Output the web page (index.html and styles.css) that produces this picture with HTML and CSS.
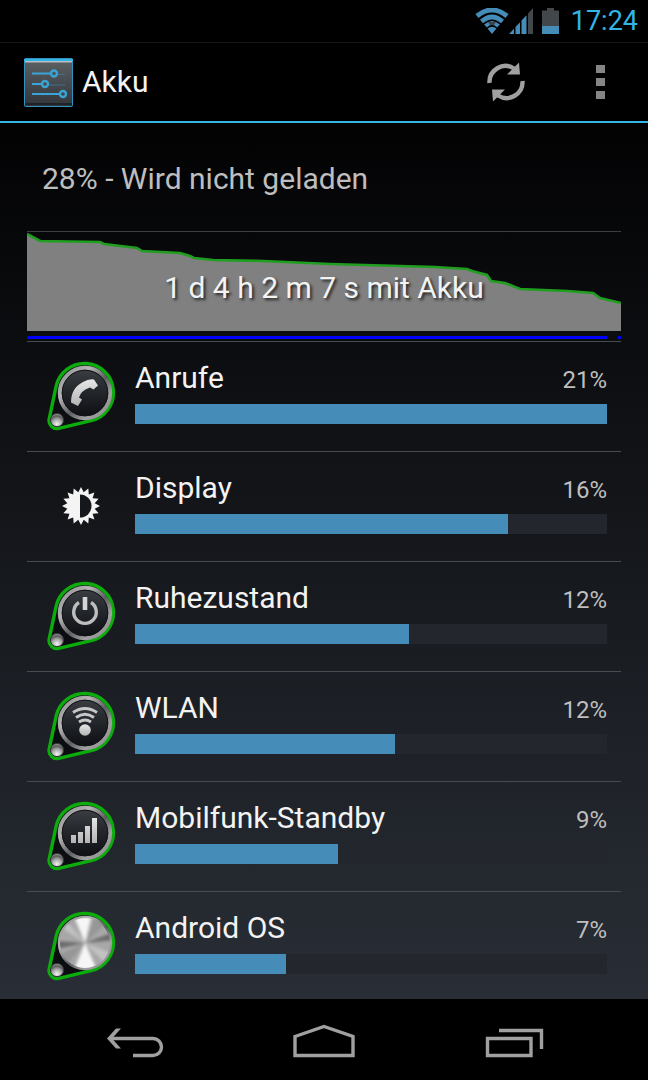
FILE: index.html
```
<!DOCTYPE html>
<html lang="de">
<head>
    <meta charset="UTF-8">
    <meta name="viewport" content="width=device-width, initial-scale=1.0">
    <title>Akku</title>
    <link rel="stylesheet" href="styles.css">
</head>
<body>
    <!-- Gemeinsame Teile der Symbole -->
    <svg class="defs" aria-hidden="true">
        <defs>
            <linearGradient id="ring" x1="0" y1="0" x2="1" y2="1">
                <stop offset="0" stop-color="#8c8c8c"/>
                <stop offset="0.3" stop-color="#b4b4b4"/>
                <stop offset="0.55" stop-color="#5c5e60"/>
                <stop offset="0.75" stop-color="#a0a0a0"/>
                <stop offset="1" stop-color="#8a8a8a"/>
            </linearGradient>
            <linearGradient id="face" x1="0" y1="0" x2="0" y2="1">
                <stop offset="0" stop-color="#3c3f43"/>
                <stop offset="0.45" stop-color="#24272c"/>
                <stop offset="1" stop-color="#0c0e12"/>
            </linearGradient>
            <linearGradient id="glyph" x1="0" y1="0" x2="0" y2="1">
                <stop offset="0" stop-color="#e6e6e6"/>
                <stop offset="1" stop-color="#b4b4b4"/>
            </linearGradient>
            <radialGradient id="bead" cx="0.5" cy="0.8" r="0.8">
                <stop offset="0" stop-color="#f4f4f4"/>
                <stop offset="0.45" stop-color="#a8a8a8"/>
                <stop offset="0.75" stop-color="#5a5a5a"/>
                <stop offset="1" stop-color="#a0a0a0"/>
            </radialGradient>
            <linearGradient id="panel" x1="0" y1="0" x2="0" y2="1">
                <stop offset="0" stop-color="#5c6164"/>
                <stop offset="1" stop-color="#32363b"/>
            </linearGradient>
            <clipPath id="disc"><circle cx="39" cy="33" r="25"/></clipPath>
            <filter id="soft"><feGaussianBlur stdDeviation="1.6"/></filter>
        </defs>
        <symbol id="knob" viewBox="0 0 70 72">
            <path d="M10.1 26.4A29 29 0 1 1 45.1 60.7L12.8 68.3A8 8 0 0 1 3.2 58.8Z" fill="#0b0d10" stroke="#0cac0c" stroke-width="3.4"/>
            <circle cx="39" cy="33" r="25.2" fill="url(#face)" stroke="url(#ring)" stroke-width="4"/>
            <circle cx="39" cy="33" r="22.8" fill="none" stroke="#111316" stroke-width="1"/>
            <circle cx="11" cy="60" r="6.6" fill="url(#bead)" stroke="#34373a" stroke-width="1"/>
        </symbol>
    </svg>

    <div class="statusbar">
        <svg class="status-icon wifi" viewBox="0 0 34 26">
            <g fill="none" stroke="#468cb8">
                <path d="M2 8Q17-4 32 8" stroke-width="5"/>
                <path d="M6.500 13.500Q17 4.500 27.500 13.500" stroke-width="4.600"/>
                <path d="M10.500 18Q17 12 23.500 18" stroke-width="4"/>
            </g>
            <path d="M13 14h8l-2 3h-4z" fill="#39434b"/>
            <path d="M12.500 20.500Q17 17 21.500 20.500L17 26Z" fill="#468cb8"/>
        </svg>
        <svg class="status-icon signal" viewBox="0 0 24 26">
            <path d="M0 26L5 20.700V26ZM6.500 26V19L11 14.200V26ZM12.500 26V12.500L17.500 7.200V26Z" fill="#468cb8"/>
            <path d="M19 26V5.600L24 0V26Z" fill="#41474b"/>
        </svg>
        <svg class="status-icon battery" viewBox="0 0 17 26">
            <path d="M0 2.500H5V0H12V2.500H17V19H0Z" fill="#41474b"/>
            <path d="M0 18H17V26H0Z" fill="#468cb8"/>
        </svg>
        <span class="clock">17:24</span>
    </div>

    <header class="actionbar">
        <svg class="app-icon" viewBox="0 0 49 49">
            <rect x="0.500" y="0.500" width="48" height="48" rx="1" fill="url(#panel)" stroke="#3292c2"/>
            <path d="M0 1h49v2H0z" fill="#33b5e5"/>
            <path d="M1 3h47v1.500H1z" fill="#b4bec4"/>
            <path d="M1 46h47" stroke="#1d2327" stroke-width="2"/>
            <g fill="none" stroke="#3ba4d6" stroke-width="2">
                <path d="M8 15.500H27M8 26H18M8 36H36"/>
                <path d="M33 16.500H41M24 27H41" stroke="#40718a" stroke-width="1"/>
                <circle cx="30" cy="15.500" r="3" stroke-width="2.400"/>
                <circle cx="21" cy="26" r="3" stroke-width="2.400"/>
                <circle cx="39" cy="36" r="3" stroke-width="2.400"/>
            </g>
        </svg>
        <h1 class="title">Akku</h1>
        <button class="action" aria-label="Aktualisieren">
            <svg class="refresh" viewBox="0 0 38 40">
                <g fill="none" stroke="#a0a0a0" stroke-width="4.400">
                    <path d="M2.500 21A16 16 0 0 1 27 6.500"/>
                    <path d="M35.500 19A16 16 0 0 1 11 33.500"/>
                </g>
                <path d="M32 0.500L33 12.500H20ZM6 39.500L5 27.500H18Z" fill="#a0a0a0"/>
            </svg>
        </button>
        <button class="action" aria-label="Menü">
            <svg class="overflow" viewBox="0 0 9 34">
                <path d="M0 0h9v8H0zM0 13h9v8H0zM0 26h9v8H0z" fill="#858585"/>
            </svg>
        </button>
    </header>

    <main class="content">
        <p class="summary">28% - Wird nicht geladen</p>

        <section class="history">
            <svg class="chart" viewBox="0 0 594 109" preserveAspectRatio="none">
                <path d="M0 2L13 9L73 10L77 12L110 16L115 19L153 21L163 24L167 26L186 28L236 29L303 32L408 35L440 37L445 39L460 43L464 49L478 51L493 57L540 59L566 61L573 66L594 71V99H0Z" fill="#808080"/>
                <path d="M0 2L13 9L73 10L77 12L110 16L115 19L153 21L163 24L167 26L186 28L236 29L303 32L408 35L440 37L445 39L460 43L464 49L478 51L493 57L540 59L566 61L573 66L594 71" fill="none" stroke="#1f9e1f" stroke-width="2.600"/>
                <path d="M0 104H580V107H0ZM591 104H594V107H591Z" fill="#0000ff"/>
            </svg>
            <span class="duration">1 d 4 h 2 m 7 s mit Akku</span>
        </section>

        <ul class="usage">
            <li>
                <a class="item" href="#">
                    <svg class="icon" viewBox="0 0 70 72">
                        <use href="#knob"/>
                        <path d="M25 42.500Q25 28 37 22Q43 18.500 48 19.500L52 25.500L47.500 29.500L44 27.500Q35 30.500 33 37.500L36 39.500L32 46Z" fill="url(#glyph)"/>
                    </svg>
                    <div class="info">
                        <div class="label"><span class="name">Anrufe</span><span class="percent">21%</span></div>
                        <div class="bar"><div class="fill" style="width: 100%"></div></div>
                    </div>
                </a>
            </li>
            <li>
                <a class="item" href="#">
                    <svg class="icon" viewBox="0 0 70 72">
                        <g transform="translate(35 36)">
                            <path d="M19 0L13.700 2.700L17.600 7.300L11.600 7.800L13.400 13.400L7.800 11.600L7.300 17.600L2.700 13.700L0 19L-2.700 13.700L-7.300 17.600L-7.800 11.600L-13.400 13.400L-11.600 7.800L-17.600 7.300L-13.700 2.700L-19 0L-13.700-2.700L-17.600-7.300L-11.600-7.800L-13.400-13.400L-7.800-11.600L-7.300-17.600L-2.700-13.700L0-19L2.700-13.700L7.300-17.600L7.800-11.600L13.400-13.400L11.600-7.800L17.600-7.300L13.700-2.700Z" fill="#f4f4f4"/>
                            <path d="M-1-11.500A11.500 11.500 0 0 1-1 11.500Z" fill="#14171b"/>
                        </g>
                    </svg>
                    <div class="info">
                        <div class="label"><span class="name">Display</span><span class="percent">16%</span></div>
                        <div class="bar"><div class="fill" style="width: 79%"></div></div>
                    </div>
                </a>
            </li>
            <li>
                <a class="item" href="#">
                    <svg class="icon" viewBox="0 0 70 72">
                        <use href="#knob"/>
                        <path d="M33 22.500A11.300 11.300 0 1 0 45 22.500" fill="none" stroke="#bebebe" stroke-width="3.400"/>
                        <path d="M36.700 17h4.600v13h-4.600z" fill="#d4d4d4"/>
                    </svg>
                    <div class="info">
                        <div class="label"><span class="name">Ruhezustand</span><span class="percent">12%</span></div>
                        <div class="bar"><div class="fill" style="width: 58%"></div></div>
                    </div>
                </a>
            </li>
            <li>
                <a class="item" href="#">
                    <svg class="icon" viewBox="0 0 70 72">
                        <use href="#knob"/>
                        <g fill="none" stroke="#c8c8c8" stroke-width="2.800">
                            <path d="M27 22.500Q39 14.500 51 22.500"/>
                            <path d="M30 27.500Q39 21 48 27.500"/>
                            <path d="M33 32Q39 28 45 32"/>
                        </g>
                        <circle cx="39" cy="40" r="5.800" fill="url(#glyph)"/>
                    </svg>
                    <div class="info">
                        <div class="label"><span class="name">WLAN</span><span class="percent">12%</span></div>
                        <div class="bar"><div class="fill" style="width: 55%"></div></div>
                    </div>
                </a>
            </li>
            <li>
                <a class="item" href="#">
                    <svg class="icon" viewBox="0 0 70 72">
                        <use href="#knob"/>
                        <path d="M25 35h5v8h-5zM32 32h5v11h-5zM39 26h5v17h-5zM46 18h5v25h-5z" fill="url(#glyph)"/>
                    </svg>
                    <div class="info">
                        <div class="label"><span class="name">Mobilfunk-Standby</span><span class="percent">9%</span></div>
                        <div class="bar"><div class="fill" style="width: 43%"></div></div>
                    </div>
                </a>
            </li>
            <li>
                <a class="item" href="#">
                    <svg class="icon" viewBox="0 0 70 72">
                        <use href="#knob"/>
                        <g clip-path="url(#disc)">
                            <circle cx="39" cy="33" r="25" fill="#a8a8a8"/>
                            <g filter="url(#soft)">
                                <path d="M39 33L27 4H46ZM39 33L27 62H52Z" fill="#f6f6f6"/>
                                <path d="M39 33L10 31V39ZM39 33L68 22V30Z" fill="#6c6c6c"/>
                                <path d="M39 33L50 4L62 12ZM39 33L10 46L20 56Z" fill="#969696"/>
                                <path d="M39 33L10 14L18 8ZM39 33L68 44L60 54Z" fill="#c2c2c2"/>
                            </g>
                        </g>
                    </svg>
                    <div class="info">
                        <div class="label"><span class="name">Android OS</span><span class="percent">7%</span></div>
                        <div class="bar"><div class="fill" style="width: 32%"></div></div>
                    </div>
                </a>
            </li>
        </ul>
    </main>

    <nav class="navbar">
        <button class="nav-button" aria-label="Zurück">
            <svg viewBox="0 0 62 36">
                <path d="M7 16.500H50A8.500 8.500 0 0 1 50 33.500H30" fill="none" stroke="#a0a0a0" stroke-width="3.400"/>
                <path d="M4 16.500L13 6.500H18L9 16.500L18 26.500H13Z" fill="#a0a0a0"/>
            </svg>
        </button>
        <button class="nav-button" aria-label="Startseite">
            <svg viewBox="0 0 62 36">
                <path d="M2 14.500L31 4.500L60 14.500V33.500H2Z" fill="none" stroke="#a0a0a0" stroke-width="3.400"/>
            </svg>
        </button>
        <button class="nav-button" aria-label="Letzte Apps">
            <svg viewBox="0 0 62 36">
                <path d="M4.500 16.500H48V33.500H4.500ZM16 8.500H58.500V27" fill="none" stroke="#a0a0a0" stroke-width="3.400"/>
            </svg>
        </button>
    </nav>
</body>
</html>
```
FILE: styles.css
```
* {
    box-sizing: border-box;
}
body {
    font-family: Roboto, Arial, sans-serif;
    display: flex;
    flex-direction: column;
    height: 100vh;
    margin: 0;
    background: #000000;
    color: #f3f3f3;
}
button {
    padding: 0;
    border: none;
    background: none;
    cursor: pointer;
}
svg {
    display: block;
    flex: none;
}
.defs {
    position: absolute;
    width: 0;
    height: 0;
}
.statusbar {
    display: flex;
    justify-content: flex-end;
    align-items: center;
    height: 43px;
    padding-right: 10px;
    border-bottom: 1px solid #141414;
}
.status-icon {
    height: 26px;
}
.wifi {
    width: 34px;
}
.signal {
    width: 24px;
}
.battery {
    width: 17px;
    margin: 0 12px 0 9px;
}
.clock {
    font-size: 27px;
    line-height: 42px;
    color: #33b5e5;
}
.actionbar {
    display: flex;
    align-items: center;
    height: 80px;
    padding-left: 24px;
    border-bottom: 2px solid #33b5e5;
}
.app-icon {
    width: 49px;
    height: 49px;
}
.title {
    flex: 1;
    margin: 0 0 0 9px;
    font-size: 30px;
    font-weight: normal;
    line-height: 40px;
}
.action {
    display: flex;
    justify-content: center;
    align-items: center;
    width: 95px;
    height: 78px;
}
.refresh {
    width: 38px;
    height: 40px;
}
.overflow {
    width: 9px;
    height: 34px;
}
.content {
    flex: 1;
    min-height: 0;
    overflow-y: auto;
    scrollbar-width: none;
    background: linear-gradient(#020203, #292e36);
}
.summary {
    margin: 0;
    padding: 36px 42px 32px;
    font-size: 30px;
    line-height: 40px;
    color: #bebebe;
}
.history {
    position: relative;
    margin: 0 27px;
    border-top: 1px solid #3c3f41;
}
.chart {
    width: 100%;
    height: 109px;
}
.duration {
    position: absolute;
    top: 36px;
    left: 0;
    width: 100%;
    font-size: 30px;
    line-height: 40px;
    text-align: center;
    text-shadow: 2px 2px 3px #222222;
}
.usage {
    margin: 0 27px;
    padding: 0;
    list-style: none;
}
.item {
    display: flex;
    align-items: flex-start;
    gap: 19px;
    height: 110px;
    padding: 18px 14px 0 19px;
    border-top: 1px solid #484c4f;
    color: inherit;
    text-decoration: none;
}
.icon {
    width: 70px;
    height: 72px;
}
.info {
    flex: 1;
}
.label {
    display: flex;
    justify-content: space-between;
    align-items: baseline;
    height: 36px;
    line-height: 36px;
}
.name {
    font-size: 30px;
}
.percent {
    font-size: 24px;
    color: #bebebe;
}
.bar {
    height: 20px;
    margin-top: 8px;
    background: #23272d;
}
.fill {
    height: 100%;
    background: #468cb8;
}
.navbar {
    display: flex;
    align-items: center;
    height: 81px;
    padding: 0 39px;
}
.nav-button {
    flex: 1;
    display: flex;
    justify-content: center;
    align-items: center;
    height: 100%;
}
.nav-button svg {
    width: 62px;
    height: 36px;
}
```
